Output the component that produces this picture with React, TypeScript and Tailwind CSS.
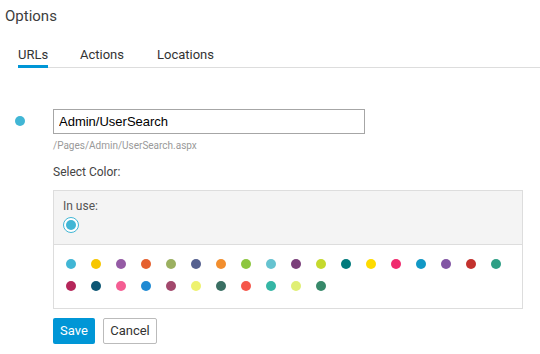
const rowOne = [
  "#41b6d5", "#f7c600", "#955ba5", "#e5602f", "#9bb060", "#55608f",
  "#f28e2e", "#8cc63f", "#66c3d0", "#7b3f7a", "#c5d92d", "#007a7c",
  "#fedb00", "#f02b6e", "#1298c5", "#8255a4", "#c3322e", "#2e9f85",
];

const rowTwo = [
  "#b5265a", "#0d5674", "#f45e93", "#1f8ad3", "#a2486c", "#eef26e",
  "#3a6f63", "#f5574b", "#35b6a5", "#e0ef74", "#37896a",
];

const tabs = [
  { name: "URLs", width: "w-[62px]" },
  { name: "Actions", width: "w-[77px]" },
  { name: "Locations", width: "w-[80px]" },
];

export default function App() {
  const colors = [...rowOne, ...rowTwo];

  return (
    <div className="w-[540px] h-[354px] bg-white overflow-hidden font-['Roboto',sans-serif] text-[#333]">
      {/* Title */}
      <div className="ml-[5px] pt-[6px] text-[15px] leading-[20px] text-[#3d3d3d]">Options</div>

      {/* Tabs */}
      <div className="ml-[18px] mt-[19px] flex border-b border-[#dddddd]">
        {tabs.map((tab, i) => (
          <div key={tab.name} className={`${tab.width} -mb-px flex`}>
            <span
              className={`block text-[13px] leading-[20px] border-b-[3px] ${
                i === 0 ? "border-[#0096d6]" : "border-transparent"
              }`}
            >
              {tab.name}
            </span>
          </div>
        ))}
      </div>

      {/* URL row */}
      <div className="mt-[41px] flex">
        <div className="w-[53px] shrink-0">
          <div className="ml-[15px] mt-[7px] w-[10px] h-[10px] rounded-full bg-[#41b6d5]" />
        </div>
        <div className="flex flex-col">
          <input
            defaultValue="Admin/UserSearch"
            className="w-[312px] h-[25px] border border-[#a6a6a6] px-[5px] text-[13px] text-black font-['Liberation_Sans',Arial,sans-serif] outline-none"
          />
          <div className="mt-[5px] text-[10px] leading-[14px] text-[#999]">/Pages/Admin/UserSearch.aspx</div>
          <div className="mt-[11px] text-[12px] leading-[17px] text-[#444]">Select Color:</div>

          {/* Color panel */}
          <div className="mt-[9px] w-[470px] border border-[#dddddd]">
            <div className="h-[54px] bg-[#f4f4f4] border-b border-[#dddddd] px-[9px] pt-[7px]">
              <div className="text-[12px] leading-[16px] text-[#555]">In use:</div>
              <div className="mt-[3px] w-[16px] h-[16px] rounded-full border border-[#41b6d5] bg-white flex items-center justify-center">
                <div className="w-[10px] h-[10px] rounded-full bg-[#41b6d5]" />
              </div>
            </div>
            <div className="pt-[14px] pb-[17px] pl-[12px] pr-[4px] flex flex-wrap gap-x-[15px] gap-y-[12px]">
              {colors.map((c, i) => (
                <div key={i} className="w-[10px] h-[10px] rounded-full" style={{ backgroundColor: c }} />
              ))}
            </div>
          </div>

          {/* Buttons */}
          <div className="mt-[9px] flex gap-[8px]">
            <button className="w-[42px] h-[26px] rounded-[2px] bg-[#0096d6] text-white text-[13px]">Save</button>
            <button className="w-[54px] h-[26px] rounded-[2px] border border-[#bbbbbb] bg-white text-[#333] text-[13px]">
              Cancel
            </button>
          </div>
        </div>
      </div>
    </div>
  );
}
